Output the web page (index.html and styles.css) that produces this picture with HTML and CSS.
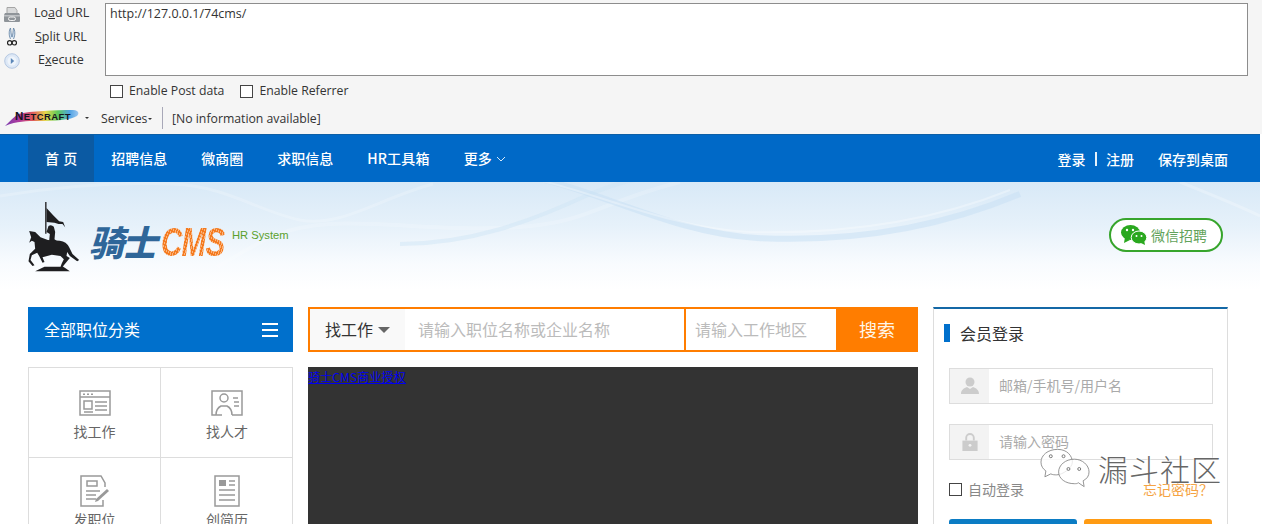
FILE: index.html
```html
<!DOCTYPE html>
<html lang="zh-CN">
<head>
<meta charset="utf-8">
<title>骑士CMS</title>
<link rel="stylesheet" href="styles.css">
</head>
<body>
<section class="hackbar">
  <div class="hb-top">
    <div class="hb-actions">
      <div class="hb-action">
        <svg class="hb-icon hb-print" viewBox="0 0 16 15"><path d="M3 .5h8l2 3v3H3z" fill="#d9dadb" stroke="#a5a5a5"/><path d="M1 6h14l1 2v6a1 1 0 0 1-1 1H1a1 1 0 0 1-1-1V8z" fill="#8f9499"/><path d="M0 8h16v1.500H0z" fill="#bfc2c5"/><rect x="4.500" y="10" width="7" height="3.500" rx="1.700" fill="none" stroke="#f2f2f2"/></svg>
        <span class="hb-label hb-load">Lo<u>a</u>d URL</span>
      </div>
      <div class="hb-action">
        <svg class="hb-icon hb-cut" viewBox="0 0 10 18"><path d="M3.500 11C1.500 7 2 2 3.500 0c.5 3 .5 7 1.500 9M6.500 11C8.500 7 8 2 6.500 0c-.5 3-.5 7-1.500 9" fill="#cfdff0" stroke="#5f7f9f" stroke-width=".8"/><circle cx="2.700" cy="14.800" r="2.200" fill="none" stroke="#222" stroke-width="1.200"/><circle cx="7.300" cy="14.800" r="2.200" fill="none" stroke="#222" stroke-width="1.200"/></svg>
        <span class="hb-label hb-split"><u>S</u>plit URL</span>
      </div>
      <div class="hb-action">
        <svg class="hb-icon hb-play" viewBox="0 0 16 16"><circle cx="8" cy="8" r="7.300" fill="#dde8f6" stroke="#b5c8e2"/><circle cx="8" cy="8" r="4.500" fill="#eef4fb"/><path d="M6.800 5l3.400 3-3.400 3z" fill="#5c87b8"/></svg>
        <span class="hb-label hb-exec">E<u>x</u>ecute</span>
      </div>
    </div>
    <div class="hb-url">http://127.0.0.1/74cms/</div>
  </div>
  <div class="hb-options">
    <span class="hb-check"><i class="box"></i>Enable Post data</span>
    <span class="hb-check"><i class="box"></i>Enable Referrer</span>
  </div>
  <div class="hb-netcraft">
    <svg class="nc-logo" viewBox="0 0 74 18">
      <defs><linearGradient id="rainbow" x1="0" x2="1" y1="0" y2="0">
        <stop offset="0" stop-color="#7a3fb0"/><stop offset=".2" stop-color="#b0399c"/><stop offset=".38" stop-color="#e05a5a"/><stop offset=".55" stop-color="#e6d84a"/><stop offset=".72" stop-color="#5fc95a"/><stop offset=".88" stop-color="#4fa3e3"/><stop offset="1" stop-color="#9cc6f0"/>
      </linearGradient></defs>
      <path d="M0 17C5 12 9 8 13 5 26 2 50 1 68 1c5 0 7 3 4 6-6 4-22 5-40 5-10 0-20 0-32 5z" fill="url(#rainbow)"/>
      <text class="nc-text" x="10" y="11"><tspan class="nc-big">N</tspan>ETCRAFT</text>
    </svg>
    <span class="nc-drop"></span>
    <span class="nc-services">Services<i class="nc-drop small"></i></span>
    <span class="nc-sep"></span>
    <span class="nc-info">[No information available]</span>
  </div>
</section>

<nav class="topnav">
  <div class="nav-left">
    <a class="nav-item active">首 页</a>
    <a class="nav-item">招聘信息</a>
    <a class="nav-item">微商圈</a>
    <a class="nav-item">求职信息</a>
    <a class="nav-item nav-hr">HR工具箱</a>
    <a class="nav-item">更多<svg class="chev" viewBox="0 0 10 6"><path d="M1 1l4 4 4-4" fill="none" stroke="#d7e9f8" stroke-width="1"/></svg></a>
  </div>
  <div class="nav-right">
    <a>登录</a><span class="nav-bar"></span><a>注册</a><a class="nav-save">保存到桌面</a>
  </div>
</nav>

<header class="banner">
  <svg class="waves" viewBox="0 0 1260 108" preserveAspectRatio="none">
    <path d="M0 14C60 4 120 0 173 2S260 30 300 38 380 16 433 2" fill="none" stroke="#fff" stroke-width="3" opacity=".2"/>
    <path d="M217 85C260 60 280 45 330 42S450 50 520 45 600 20 680 0" fill="none" stroke="#fff" stroke-width="4" opacity=".18"/>
    <path d="M400 62C470 62 530 40 590 12 620 0 630 -2 650 -4" fill="none" stroke="#d0e5f6" stroke-width="4" opacity=".5"/>
    <path d="M545 -2C610 14 680 52 757 56 840 60 930 50 1020 12" fill="none" stroke="#c9e0f4" stroke-width="6" opacity=".55"/>
    <path d="M538 -2C600 12 670 46 750 50 830 52 920 44 1010 8" fill="none" stroke="#fff" stroke-width="2" opacity=".3"/>
    <path d="M1180 0C1210 12 1240 24 1260 34" fill="none" stroke="#fff" stroke-width="3" opacity=".25"/>
  </svg>
  <div class="brand">
    <svg class="knight" viewBox="25 10 155 210">
      <path fill="#1e1e20" d="M76 10h4v95h-4z"/>
      <path fill="#1e1e20" d="M80 28L100 50 118 68 130 70 136 86 128 76 116 76 104 72 80 70z"/>
      <path fill="#1e1e20" d="M86 82Q94 76 102 84L106 100 104 122 112 128 100 132 88 126 90 106 80 100z"/>
      <path fill="#1e1e20" d="M28 97L46 100 62 116 84 124 120 126Q140 128 148 146L158 166 178 184 172 188 150 172 142 160 140 172 150 178 132 200 128 206 122 204 126 194 132 182 122 172 96 168 82 172 68 176 74 190 68 192 58 172 52 162 36 170 32 184 44 200 38 202 26 188 30 166 46 150 44 130 36 126 28 132 34 116z"/>
      <path fill="#1e1e20" d="M66 208L74 204H130L136 208 150 218H46z"/>
    </svg>
    <span class="logo-cn">骑士</span>
    <span class="logo-cms">CMS</span>
    <span class="logo-sub">HR System</span>
  </div>
  <a class="wechat">
    <svg class="wechat-icon" viewBox="0 0 26 20"><ellipse cx="9.500" cy="7.500" rx="9.500" ry="7.500" fill="#2aa81f"/><path d="M4 12l-1 6 6-3z" fill="#2aa81f"/><ellipse cx="18" cy="12.500" rx="7.800" ry="6.500" fill="#2aa81f" stroke="#fff" stroke-width="1"/><path d="M20 18l4 2-1-5z" fill="#2aa81f"/><circle cx="6" cy="5" r="1.200" fill="#fff"/><circle cx="12" cy="5" r="1.200" fill="#fff"/><circle cx="15.500" cy="11" r="1" fill="#fff"/><circle cx="20.500" cy="11" r="1" fill="#fff"/></svg>
    微信招聘
  </a>
</header>

<main class="content">
  <aside class="col-left">
    <div class="cat-head">全部职位分类<span class="burger"><i></i><i></i><i></i></span></div>
    <div class="quick">
      <a class="quick-cell">
        <svg class="q-icon" viewBox="0 0 32 26"><g fill="none" stroke="#999" stroke-width="1.500"><path d="M1 1h30v24H1z"/><path d="M1 7h30"/><path d="M5 11h8v8H5zM16 12h12M16 16h12M16 20h12M5 22h9"/></g><path d="M4 3.500h2v1.500H4zM8 3.500h2v1.500H8zM12 3.500h2v1.500h-2z" fill="#999"/></svg>
        <span>找工作</span>
      </a>
      <a class="quick-cell">
        <svg class="q-icon" viewBox="0 0 32 26"><g fill="none" stroke="#999" stroke-width="1.500"><path d="M11 25H1V1h30v24H21"/><circle cx="13" cy="8" r="4"/><path d="M5 25c0-6 3-8 5-9h6c2 1 5 3 5 9M22 8h5M23 12h5M23 16h5"/></g></svg>
        <span>找人才</span>
      </a>
      <a class="quick-cell">
        <svg class="q-icon tall" viewBox="0 0 30 32"><g fill="none" stroke="#999" stroke-width="1.500"><path d="M23 25v6H1V1h20l4 7v4"/><path d="M7 6h10v5H7zM6 16h14M6 20h10M6 24h10"/></g><path d="M16 24l11-10 2 2-11 10-3 1z" fill="#999"/></svg>
        <span>发职位</span>
      </a>
      <a class="quick-cell">
        <svg class="q-icon tall" viewBox="0 0 26 32"><g fill="none" stroke="#999" stroke-width="1.500"><path d="M1 1h24v30H1z"/><path d="M15 6h6M15 10h6M5 15h16M5 20h16M5 25h16"/></g><path d="M5 5h7v6H5z" fill="#999"/></svg>
        <span>创简历</span>
      </a>
    </div>
  </aside>

  <section class="col-mid">
    <form class="search">
      <div class="s-type">找工作<i class="caret"></i></div>
      <div class="s-key">请输入职位名称或企业名称</div>
      <div class="s-area">请输入工作地区</div>
      <div class="s-btn">搜索</div>
    </form>
    <div class="ad"><a class="ad-link">骑士CMS商业授权</a></div>
  </section>

  <aside class="col-right">
    <h3 class="login-title">会员登录</h3>
    <div class="field">
      <span class="f-icon"><svg viewBox="0 0 18 18"><circle cx="9" cy="5" r="4.500" fill="#ccc"/><path d="M0 17c0-4 3-6 6-7l3 2 3-2c3 1 6 3 6 7z" fill="#ccc"/></svg></span>
      <span class="f-ph">邮箱/手机号/用户名</span>
    </div>
    <div class="field">
      <span class="f-icon"><svg viewBox="0 0 16 19"><path d="M4 8V5a4 4 0 0 1 8 0v3" fill="none" stroke="#ccc" stroke-width="2"/><path d="M0 8h16v11H0z" fill="#ccc"/><circle cx="8" cy="13" r="1.500" fill="#f3f3f3"/></svg></span>
      <span class="f-ph">请输入密码</span>
    </div>
    <div class="login-opts">
      <span class="auto"><i class="box dark"></i>自动登录</span>
      <a class="forgot">忘记密码？</a>
    </div>
    <div class="login-btns"><a class="btn-blue"></a><a class="btn-orange"></a></div>
  </aside>
</main>

<div class="watermark">
  <svg class="wm-icon" viewBox="0 0 52 40"><g fill="#fff" fill-opacity=".8" stroke="#888" stroke-width=".9"><path d="M18 1C8 1 1 7 1 14c0 4 2 7 5 9l-1 6 6-3c2 1 4 1 6 1 6 0 16-7 16-13S28 1 18 1z"/><path d="M35 11c-9 0-16 6-16 13s7 12 16 12c2 0 3 0 4-1l6 4-1-6c4-2 6-5 6-9 0-7-7-13-15-13z"/></g><g fill="none" stroke="#777"><circle cx="11" cy="8" r="1.500"/><circle cx="24" cy="8" r="1.500"/><circle cx="29" cy="21" r="1.500"/><circle cx="40" cy="21" r="1.500"/></g></svg>
  <span class="wm-text">漏斗社区</span>
</div>
</body>
</html>
```
FILE: styles.css
```css
* { box-sizing: border-box; }
html, body { margin: 0; padding: 0; overflow: hidden; }
body {
  width: 1262px;
  height: 524px;
  position: relative;
  background: #fff;
  font-family: "Noto Sans CJK SC", "Noto Sans", sans-serif;
}
a { text-decoration: none; color: inherit; }
i { font-style: normal; }

/* hackbar */
.hackbar {
  height: 134px;
  background: #f5f5f5;
  font-family: "Open Sans", "Noto Sans", sans-serif;
  font-size: 12.500px;
  color: #333;
  display: flex;
  flex-direction: column;
}
.hb-top { display: flex; padding: 3px 14px 0 0; }
.hb-actions { width: 105px; display: flex; flex-direction: column; margin-top: -2px; }
.hb-action { height: 23.500px; display: flex; align-items: center; }
.hb-icon { flex: none; display: block; }
.hb-print { width: 16px; height: 15px; margin: 4px 0 0 4px; }
.hb-cut { width: 10px; height: 18px; margin: 2px 0 0 7px; }
.hb-play { width: 16px; height: 16px; margin: 2px 0 0 4px; }
.hb-label { white-space: nowrap; }
.hb-load { margin-left: 14px; }
.hb-split { margin-left: 18px; }
.hb-exec { margin-left: 18px; }
.hb-url {
  flex: 1;
  height: 73px;
  background: #fff;
  border: 1px solid #8d8d8d;
  padding: 2px 4px;
  line-height: 16px;
}
.hb-options { display: flex; height: 20px; margin-top: 5px; padding-left: 110px; gap: 16px; font-size: 12.250px; }
.hb-check { display: flex; align-items: center; gap: 6px; line-height: 20px; }
.box { display: block; width: 13px; height: 13px; border: 1px solid #444; background: #fff; flex: none; }
.hb-netcraft { display: flex; align-items: center; height: 24px; margin-top: 5px; padding-left: 5px; font-size: 12.250px; }
.nc-logo { width: 74px; height: 18px; flex: none; }
.nc-text { font: 700 9.500px "Liberation Sans", sans-serif; letter-spacing: .4px; fill: #15151f; }
.nc-big { font-size: 11.500px; }
.nc-drop {
  display: inline-block;
  width: 0;
  height: 0;
  margin: 0 12px 0 6px;
  border: 2.500px solid transparent;
  border-top-color: #333;
  border-bottom: 0;
}
.nc-drop.small { margin: 0 0 0 1px; vertical-align: middle; }
.nc-services { width: 52px; white-space: nowrap; }
.nc-sep { width: 1px; height: 22px; background: #a8a8b8; margin: 0 9px; }

/* nav */
.topnav {
  width: 1260px;
  height: 48px;
  background: #0069c7;
  border-top: 1px solid #0c5fa6;
  color: #fff;
  font-size: 14px;
  font-weight: 500;
  display: flex;
  justify-content: space-between;
  padding: 0 32px 0 28px;
}
.nav-left { display: flex; }
.nav-item { display: flex; align-items: center; padding: 0 17px; line-height: 47px; white-space: pre; }
.nav-item.active { background: #0b5aa3; word-spacing: 1px; }
.nav-hr { letter-spacing: .2px; }
.chev { width: 10px; height: 6px; margin-left: 4px; }
.nav-right { display: flex; align-items: center; }
.nav-bar { margin: 0 9.500px; width: 1.500px; height: 14px; background: #e6f2fb; }
.nav-save { margin-left: 24px; }

/* banner */
.banner {
  width: 1260px;
  height: 108px;
  position: relative;
  padding: 19px 37px 0 28px;
  display: flex;
  justify-content: space-between;
  align-items: flex-start;
  background: linear-gradient(#d8e9f7 0, #e6f1fa 40%, #f8fbfe 75%, #fff 100%);
}
.waves { position: absolute; inset: 0; width: 100%; height: 100%; }
.brand { position: relative; display: flex; align-items: flex-start; }
.knight { width: 52px; height: 70px; flex: none; margin-top: 1px; }
.logo-cn {
  width: 67px;
  margin: 15px 0 0 9px;
  font: italic 900 35px/50px "Noto Sans CJK SC", sans-serif;
  color: #2f6699;
  letter-spacing: -2px;
  white-space: nowrap;
}
.logo-cms {
  width: 92px;
  margin: 18px -26px 0 5px;
  padding-right: 6px;
  font: italic 900 41px/46px "Liberation Sans", sans-serif;
  letter-spacing: -1px;
  transform: scaleX(.72);
  transform-origin: 0 50%;
  color: transparent;
  background: repeating-linear-gradient(115deg, #f47a1f 0 2px, #fbb27a 2px 3px);
  -webkit-background-clip: text;
  background-clip: text;
}
.logo-sub { margin: 26px 0 0 5px; font: 11.200px/16px "Liberation Sans", sans-serif; color: #5aa02c; }
.wechat {
  position: relative;
  margin-top: 17px;
  width: 114px;
  height: 34px;
  border: 2px solid #37a52c;
  border-radius: 17px;
  background: #fff;
  display: flex;
  align-items: center;
  padding-left: 10px;
  gap: 4px;
  font-size: 14px;
  color: #63a35c;
  white-space: nowrap;
}
.wechat-icon { width: 26px; height: 20px; flex: none; }

/* content */
.content { display: flex; gap: 15px; padding: 17px 0 0 28px; }
.col-left { width: 265px; flex: none; }
.cat-head {
  height: 45px;
  background: #0070cc;
  color: #fff;
  font-size: 16px;
  line-height: 45px;
  padding: 0 15px 0 16px;
  display: flex;
  justify-content: space-between;
  align-items: center;
}
.burger { display: flex; flex-direction: column; gap: 4px; width: 16px; }
.burger i { display: block; height: 2px; background: #fff; }
.quick {
  margin-top: 15px;
  display: grid;
  grid-template-columns: 132px 132px;
  grid-auto-rows: 90px;
  border: 1px solid #ddd;
  border-width: 1px 1px 0 1px;
  width: 265px;
}
.quick-cell {
  display: flex;
  flex-direction: column;
  align-items: center;
  padding-top: 22px;
  border-bottom: 1px solid #ddd;
  color: #666;
  font-size: 14px;
  line-height: 20px;
}
.quick-cell:nth-child(odd) { border-right: 1px solid #ddd; }
.quick-cell:nth-child(n+3) { padding-top: 17px; }
.q-icon { width: 32px; height: 26px; margin-bottom: 5px; }
.q-icon.tall { height: 32px; margin-bottom: 2px; }

/* search */
.col-mid { width: 610px; flex: none; }
.search {
  margin: 0;
  height: 45px;
  display: flex;
  border: 2px solid #ff7d00;
  border-right: 0;
  font-size: 16px;
  line-height: 41px;
  color: #bbb;
  background: #fff;
}
.s-type { width: 95px; background: #f9f9f9; color: #333; padding-left: 15px; display: flex; align-items: center; }
.caret { width: 0; height: 0; margin-left: 5px; border: 6px solid transparent; border-top: 6px solid #666; border-bottom: 0; }
.s-key { width: 281px; padding-left: 13px; border-right: 2px solid #ff7d00; }
.s-area { width: 150px; padding-left: 9px; }
.s-btn { flex: 1; background: #ff7d00; color: #fff6e8; font-size: 18px; text-align: center; margin: -2px 0; line-height: 45px; }
.ad { margin-top: 15px; height: 200px; background: #333; font-size: 12px; line-height: 20px; }
.ad-link { color: #0000f0; text-decoration: underline; letter-spacing: .15px; }

/* login */
.col-right {
  width: 295px;
  flex: none;
  height: 240px;
  border: 1px solid #ddd;
  border-top: 2px solid #1468a6;
  padding: 0 14px 0 15px;
}
.login-title {
  margin: 15px 0 0 -5px;
  height: 18px;
  font-size: 16px;
  font-weight: 400;
  line-height: 18px;
  color: #333;
  border-left: 6px solid #0070cc;
  padding-left: 10px;
}
.field { display: flex; height: 36px; margin-top: 20px; border: 1px solid #ddd; align-items: stretch; }
.login-title + .field { margin-top: 26px; }
.f-icon { width: 39px; background: #f3f3f3; display: flex; align-items: center; justify-content: center; }
.f-icon svg { width: 18px; height: 18px; }
.f-ph { padding-left: 10px; font-size: 14px; line-height: 33px; color: #aaa; }
.login-opts { display: flex; justify-content: space-between; margin-top: 20px; font-size: 14px; line-height: 18px; }
.auto { display: flex; align-items: center; gap: 6px; color: #888; }
.forgot { color: #f5a343; }
.login-btns { display: flex; justify-content: space-between; margin-top: 21px; width: 263px; }
.btn-blue, .btn-orange { display: block; width: 128px; height: 36px; border-radius: 3px; }
.btn-blue { background: #0b7cc4; }
.btn-orange { background: #ff9b13; }

/* watermark */
.watermark { position: absolute; left: 1040px; top: 448px; display: flex; align-items: center; gap: 7px; }
.wm-icon { width: 51px; height: 40px; }
.wm-text {
  font-size: 30px;
  line-height: 40px;
  font-weight: 200;
  letter-spacing: 1px;
  color: #666;
  text-shadow: 0 0 2px #fff, 0 0 2px #fff;
}
```
